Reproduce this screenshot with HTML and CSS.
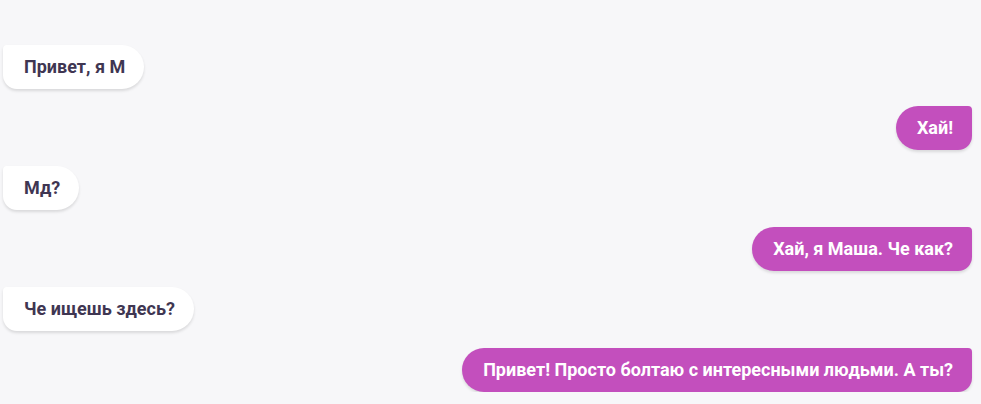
FILE: index.html
```html
<!DOCTYPE html>
<html lang="ru">
<head>
<meta charset="utf-8">
<link rel="stylesheet" href="styles.css">
</head>
<body>
<div class="chat">
  <div class="msg in">Привет, я М</div>
  <div class="msg out">Хай!</div>
  <div class="msg in">Мд?</div>
  <div class="msg out">Хай, я Маша. Че как?</div>
  <div class="msg in">Че ищешь здесь?</div>
  <div class="msg out">Привет! Просто болтаю с интересными людьми. А ты?</div>
</div>
</body>
</html>
```
FILE: styles.css
```css
html, body {
  margin: 0;
  padding: 0;
  background: #f7f7f9;
  font-family: Roboto, "Noto Sans", sans-serif;
}
.chat {
  display: flex;
  flex-direction: column;
  gap: 16.6px;
  padding: 45px 9px 0 3px;
}
.msg {
  height: 44px;
  line-height: 44px;
  padding: 0 19px 0 21px;
  font-size: 18px;
  font-weight: 700;
  box-shadow: 0 2px 3px rgba(0, 0, 0, 0.12);
  white-space: nowrap;
}
.in {
  align-self: flex-start;
  background: #ffffff;
  color: #3f3652;
  border-radius: 4px 22px 22px 14px;
}
.out {
  align-self: flex-end;
  background: #c34fbd;
  color: #ffffff;
  border-radius: 22px 4px 14px 22px;
}
```
